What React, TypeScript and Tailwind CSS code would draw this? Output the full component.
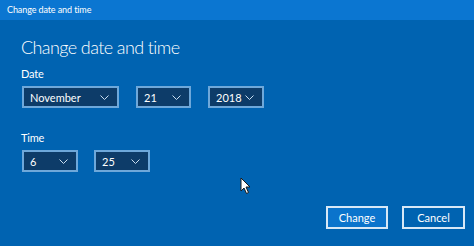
import React from 'react';

function Chevron() {
  return (
    <svg width="9" height="5" viewBox="0 0 9 5" className="shrink-0">
      <path d="M0.5 0.5 L4.5 4.5 L8.5 0.5" fill="none" stroke="#c9ddf0" strokeWidth="1" />
    </svg>
  );
}

function Select({ value, width }: { value: string; width: string }) {
  return (
    <div
      className={`${width} h-[22px] flex items-center justify-between pl-[6px] pr-[8px] bg-[#0d3c69] border-2 border-[#6ea8da] text-[11px] text-white`}
    >
      <span className="leading-none">{value}</span>
      <Chevron />
    </div>
  );
}

export default function App() {
  return (
    <div
      className="w-[474px] h-[246px] flex flex-col bg-[#0063b1] text-white overflow-hidden relative"
      style={{ fontFamily: 'Lato, "Noto Sans", sans-serif' }}
    >
      <div className="h-[20px] shrink-0 bg-[#0b76d1] flex items-center pl-[7px] text-[9px] tracking-[-0.1px]">
        Change date and time
      </div>

      <div className="flex-1 flex flex-col pl-[22px] pr-[9px]">
        <h1 className="mt-[16px] text-[18px] font-light leading-[23px] -ml-[1px] tracking-[-0.6px]">
          Change date and time
        </h1>

        <div className="mt-[7px] text-[11px] leading-[15px] -ml-[1px] tracking-[-0.2px]">Date</div>
        <div className="mt-[5px] flex">
          <Select value="November" width="w-[97px]" />
          <div className="w-[17px]" />
          <Select value="21" width="w-[55px]" />
          <div className="w-[17px]" />
          <Select value="2018" width="w-[56px]" />
        </div>

        <div className="mt-[22px] text-[11px] leading-[15px] -ml-[1px] tracking-[-0.2px]">Time</div>
        <div className="mt-[5px] flex gap-[16px]">
          <Select value="6" width="w-[56px]" />
          <Select value="25" width="w-[56px]" />
        </div>

        <div className="mt-[34px] flex justify-end gap-[14px]">
          <button className="w-[62px] h-[23px] bg-[#0b74cc] border-2 border-[#d8e8f6] text-[11px] leading-none text-white">
            Change
          </button>
          <button className="w-[63px] h-[23px] bg-[#0063b1] border-2 border-[#d8e8f6] text-[11px] leading-none text-white">
            Cancel
          </button>
        </div>
      </div>

      <svg width="12" height="18" viewBox="0 0 12 18" className="absolute left-[240px] top-[177px]">
        <path d="M1 1 L1 14 L4 11 L6.5 16.5 L8.5 15.5 L6 10 L10 10 Z" fill="white" stroke="#1a1a1a" strokeWidth="1" />
      </svg>
    </div>
  );
}
